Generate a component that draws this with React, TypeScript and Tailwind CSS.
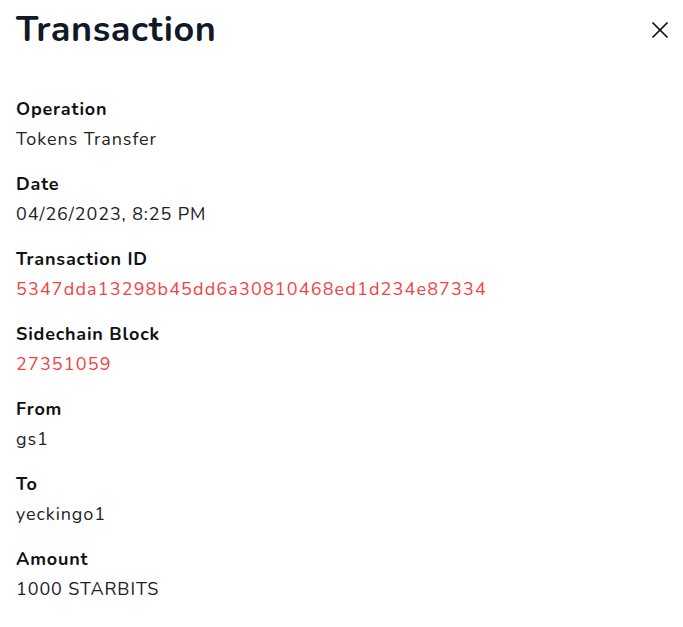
import { X } from 'lucide-react'

const rows: { label: string; value: string; link?: boolean }[] = [
  { label: 'Operation', value: 'Tokens Transfer' },
  { label: 'Date', value: '04/26/2023, 8:25 PM' },
  { label: 'Transaction ID', value: '5347dda13298b45dd6a30810468ed1d234e87334', link: true },
  { label: 'Sidechain Block', value: '27351059', link: true },
  { label: 'From', value: 'gs1' },
  { label: 'To', value: 'yeckingo1' },
  { label: 'Amount', value: '1000 STARBITS' },
]

export default function App() {
  return (
    <div className="min-h-[627px] w-[683px] bg-white px-4 pt-[10px] font-['Nunito','Lato','Open_Sans',sans-serif] text-[#111]">
      <header className="flex items-center justify-between">
        <h1 className="text-4xl font-bold leading-10 tracking-[0.6px] text-[#111827]">Transaction</h1>
        <button className="-mr-[7px] text-[#111]" aria-label="Close">
          <X size={28} strokeWidth={1.5} />
        </button>
      </header>

      <dl className="mt-[44px] flex flex-col gap-[15px]">
        {rows.map((r) => (
          <div key={r.label}>
            <dt className="text-lg font-bold leading-[30px] tracking-[0.8px]">{r.label}</dt>
            <dd
              className={
                r.link
                  ? 'text-lg leading-[30px] tracking-[1.15px] text-[#ef4444]'
                  : 'text-lg leading-[30px] tracking-[0.9px] text-[#222]'
              }
            >
              {r.value}
            </dd>
          </div>
        ))}
      </dl>
    </div>
  )
}
